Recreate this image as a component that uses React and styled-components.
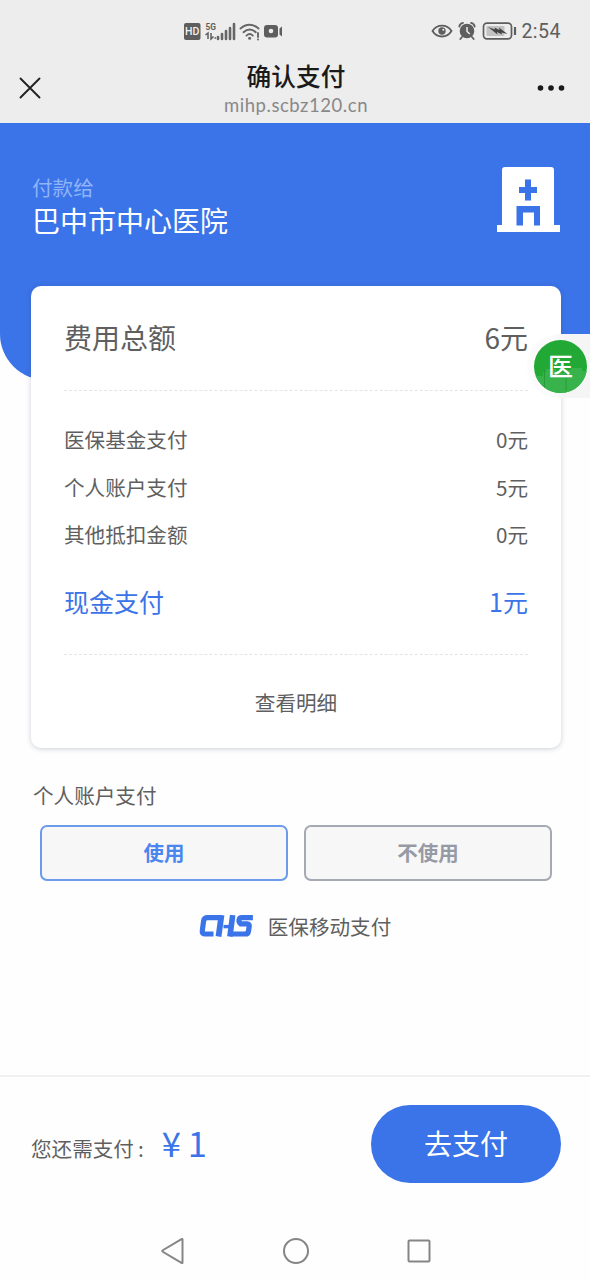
import React, { useState } from 'react';
import styled, { createGlobalStyle } from 'styled-components';

const fees = [
    { name: '医保基金支付', amount: 0 },
    { name: '个人账户支付', amount: 5 },
    { name: '其他抵扣金额', amount: 0 },
];

const StatusIcons = () => (
    <svg width="102" height="22" viewBox="0 0 102 22" fill="none">
        <rect x="1" y="3" width="16.500" height="17" rx="2" fill="#5e5e5e" />
        <text x="9.200" y="15.400" fontSize="10.500" fontWeight="500" textAnchor="middle" fill="#f2f2f2">HD</text>
        <text x="22.500" y="10" fontSize="9.500" fontWeight="700" fill="#5e5e5e" textLength="10.500" lengthAdjust="spacingAndGlyphs">5G</text>
        <path d="M22.500 15l2.500-2v6M28 13v6l2.500-2.500M31.500 18h1.500" stroke="#5e5e5e" strokeWidth="1.500" />
        <path d="M35 19v-2M39 19v-5M43 19v-8M47 19V8M51 19V4" stroke="#666" strokeWidth="2.600" strokeLinecap="round" />
        <path d="M57.500 8.500c5.500-5 12.500-5 18 0M60.500 12.200c4-3.500 8.500-3.500 12.300 0M63.500 15.600c2-1.800 4.500-1.800 6.300 0M75 13v4" stroke="#666" strokeWidth="1.900" strokeLinecap="round" />
        <circle cx="66.600" cy="18.300" r="1.500" fill="#666" />
        <circle cx="75" cy="19.500" r="1" fill="#666" />
        <rect x="81" y="5" width="14" height="12.500" rx="3" fill="#5e5e5e" />
        <circle cx="88" cy="11" r="2.300" fill="#ededed" />
        <path d="M96.500 8.500l2.500-2v10l-2.500-2z" fill="#5e5e5e" />
    </svg>
);

const BatteryIcons = () => (
    <svg width="86" height="22" viewBox="0 0 86 22" fill="none">
        <path d="M1.500 11C6 3.700 16 3.700 20.500 11 16 18.300 6 18.300 1.500 11z" stroke="#5e5e5e" strokeWidth="1.800" />
        <circle cx="11" cy="11" r="3.700" fill="#5e5e5e" />
        <circle cx="12.300" cy="9.700" r="1" fill="#ededed" />
        <circle cx="36" cy="11" r="7.300" fill="#5e5e5e" />
        <path d="M28.300 6.500c.3-2 1.700-3.300 3.700-3.600M43.700 6.500c-.3-2-1.700-3.300-3.700-3.600M31 17l-1.700 2M41 17l1.700 2" stroke="#5e5e5e" strokeWidth="1.800" strokeLinecap="round" />
        <path d="M36 7v4.500l2.800 2.500" stroke="#ededed" strokeWidth="1.500" />
        <rect x="52.500" y="3.200" width="28" height="15.600" rx="3.500" stroke="#5e5e5e" strokeWidth="1.700" />
        <rect x="55.500" y="6" width="18" height="10" rx="1" fill="#c2c2c2" />
        <path d="M57 7l7 2.500-.5-2 5 2.500-.5-2.500 4.500 3.500 4 3-6-1.500.5 2-5-2.500.5 2.500-5-4z" fill="#454545" />
        <path d="M84 7v8" stroke="#5e5e5e" strokeWidth="2.200" />
    </svg>
);

const HospitalIcon = () => (
    <svg width="64" height="68" viewBox="0 0 64 68">
        <path d="M9 1h46a3 3 0 0 1 3 3v55h6v7H1v-7h5V4a3 3 0 0 1 3-3z" fill="#fff" />
        <path d="M29 13.500h6v7.500h6v6h-6v7.500h-6V27h-6v-6h6z" fill="#3b73e8" />
        <path d="M20.500 40h23.500v19.500h-6V46.500h-11v13h-6.500z" fill="#3b73e8" />
    </svg>
);

const ChsLogo = () => (
    <svg width="54" height="22" viewBox="0 0 54 22" fill="none" stroke="#3b73e8">
        <path d="M14.500 19H6.300q-3.600 0-3-3.300L4.600 6q.5-3.300 4-3.300h14.500" strokeWidth="5.200" />
        <path d="M22.500.1L19.500 21.500" strokeWidth="5.800" />
        <path d="M24.500 11.600h9" strokeWidth="3.400" />
        <path d="M33.700.1L30.900 21.500" strokeWidth="5.600" />
        <path d="M53.900 2.700H43q-2.600 0-3 2.300t1.700 3.900h6.500q2.300 0 2 2.400l-.7 4.700q-.4 3-3.300 3H31" strokeWidth="5.200" />
    </svg>
);

const App = () => {
    const [useAccount, setUseAccount] = useState(true);

    return (
        <Page>
            <GlobalStyle />
            <StatusBar>
                <StatusIcons />
                <StatusRight>
                    <BatteryIcons />
                    <Clock>2:54</Clock>
                </StatusRight>
            </StatusBar>
            <TitleBar>
                <svg width="22" height="22" viewBox="0 0 22 22" stroke="#222" strokeWidth="1.900" strokeLinecap="round">
                    <path d="M1.500 1.500l19 19M20.500 1.500l-19 19" />
                </svg>
                <TitleBlock>
                    <Title>确认支付</Title>
                    <Host>mihp.scbz120.cn</Host>
                </TitleBlock>
                <svg width="28" height="6" viewBox="0 0 28 6" fill="#1a1a1a">
                    <circle cx="3.500" cy="3" r="2.800" />
                    <circle cx="14" cy="3" r="2.800" />
                    <circle cx="24.500" cy="3" r="2.800" />
                </svg>
            </TitleBar>
            <Hero>
                <div>
                    <PayeeLabel>付款给</PayeeLabel>
                    <Payee>巴中市中心医院</Payee>
                </div>
                <HospitalIcon />
            </Hero>
            <Card>
                <TotalRow>
                    <span>费用总额</span>
                    <span>6元</span>
                </TotalRow>
                <FeeList>
                    {fees.map((fee) => (
                        <FeeRow key={fee.name}>
                            <span>{fee.name}</span>
                            <span>{fee.amount}元</span>
                        </FeeRow>
                    ))}
                    <CashRow>
                        <span>现金支付</span>
                        <span>1元</span>
                    </CashRow>
                </FeeList>
                <DetailLink>查看明细</DetailLink>
                <FloatTab>
                    <FloatButton>
                        <Skyline viewBox="0 0 53 53">
                            <path d="M0 36h9v-4h3v-3h10v4h8v-3h7v-2h11v3h5v22H0z" fill="#38b34c" />
                            <path d="M10.500 30v20M32 33v18" stroke="#249c38" />
                        </Skyline>
                        <FloatGlyph>医</FloatGlyph>
                    </FloatButton>
                </FloatTab>
            </Card>
            <SectionLabel>个人账户支付</SectionLabel>
            <Options>
                <OptionButton $active={useAccount} onClick={() => setUseAccount(true)}>使用</OptionButton>
                <OptionButton $active={!useAccount} onClick={() => setUseAccount(false)}>不使用</OptionButton>
            </Options>
            <Brand>
                <ChsLogo />
                <span>医保移动支付</span>
            </Brand>
            <Footer>
                <DueLabel>
                    您还需支付<Colon>:</Colon>
                </DueLabel>
                <DueAmount>
                    <span>¥</span>
                    <span>1</span>
                </DueAmount>
                <PayButton>去支付</PayButton>
            </Footer>
            <NavBar>
                <svg width="26" height="28" viewBox="0 0 26 28">
                    <path d="M22.500 2.500v23q0 1-1 .4L2.800 14.800q-1-.8 0-1.600L21.500 2.100q1-.6 1 .4z" />
                </svg>
                <svg width="26" height="28" viewBox="0 0 26 28">
                    <circle cx="13" cy="14" r="12" />
                </svg>
                <svg width="26" height="28" viewBox="0 0 26 28">
                    <rect x="2.500" y="3.500" width="21" height="21" rx="1" />
                </svg>
            </NavBar>
        </Page>
    );
};

const GlobalStyle = createGlobalStyle`
* {
    box-sizing: border-box;
}
body {
    margin: 0;
    background: #fff;
}
button {
    font-family: inherit;
    cursor: pointer;
}
`;

const Page = styled.div`
width: 590px;
height: 1280px;
display: flex;
flex-direction: column;
overflow: hidden;
background: #fefefe;
color: #5f5f5f;
font-family: 'Noto Sans CJK SC', sans-serif;
font-size: 20.6px;
`;

const StatusBar = styled.div`
display: flex;
justify-content: space-between;
align-items: center;
height: 62px;
flex-shrink: 0;
padding: 0 29px 0 183px;
background: #ededed;
font-family: Roboto, sans-serif;
`;

const StatusRight = styled.div`
display: flex;
align-items: center;
gap: 4px;
`;

const Clock = styled.span`
padding-top: 2px;
font-size: 19.5px;
line-height: 22px;
letter-spacing: 0.5px;
color: #5e5e5e;
`;

const TitleBar = styled.header`
display: grid;
grid-template-columns: 28px 1fr 28px;
align-items: center;
height: 61px;
flex-shrink: 0;
padding: 0 25px 0 19px;
background: #ededed;

> svg {
    margin-bottom: 9px;
}
`;

const TitleBlock = styled.div`
display: flex;
flex-direction: column;
align-items: center;
padding: 0 0 4px 8px;
`;

const Title = styled.h1`
margin: 0;
font-size: 24.7px;
line-height: 26px;
font-weight: 500;
color: #1a1a1a;
`;

const Host = styled.div`
margin-top: 3px;
font-family: Lato, sans-serif;
font-size: 18.5px;
line-height: 28px;
letter-spacing: 0.55px;
color: #888;
`;

const Hero = styled.section`
display: flex;
justify-content: space-between;
align-items: flex-start;
height: 257px;
flex-shrink: 0;
padding: 42px 30px 0 32px;
background: #3b73e8;
border-radius: 0 0 46px 46px;

> svg {
    margin-top: 1px;
}
`;

const PayeeLabel = styled.div`
padding-top: 8px;
line-height: 28px;
color: #8fb4f8;
`;

const Payee = styled.div`
font-size: 28px;
line-height: 38px;
color: #fff;
`;

const Card = styled.section`
position: relative;
height: 462px;
flex-shrink: 0;
margin: -94px 29px 0 31px;
padding: 0 33px;
background: #fff;
border-radius: 10px;
box-shadow: 0 1px 5px rgba(60, 70, 100, 0.25);
`;

const TotalRow = styled.div`
display: flex;
justify-content: space-between;
align-items: center;
height: 105px;
padding-bottom: 3px;
border-bottom: 1px dashed #e4e4e4;
font-size: 28px;
`;

const FeeList = styled.div`
height: 264px;
padding-top: 25px;
border-bottom: 1px dashed #e4e4e4;
`;

const FeeRow = styled.div`
display: flex;
justify-content: space-between;
line-height: 47.7px;
`;

const CashRow = styled.div`
display: flex;
justify-content: space-between;
padding-top: 18px;
font-size: 25px;
line-height: 48px;
color: #3b73e8;
`;

const DetailLink = styled.div`
text-align: center;
line-height: 94px;
`;

const FloatTab = styled.div`
position: absolute;
top: 48px;
right: -29px;
display: flex;
align-items: center;
width: 63px;
height: 64px;
padding-left: 7px;
background: linear-gradient(90deg, #fbfbfb 40%, #f5f5f5 60%);
border-radius: 32px 0 0 32px;
`;

const FloatButton = styled.button`
display: grid;
width: 53px;
height: 53px;
padding: 0;
border: 0;
border-radius: 50%;
overflow: hidden;
background: #22a834;
color: #fff;
font-size: 25px;
font-weight: 500;
line-height: 51px;
`;

const Skyline = styled.svg`
grid-area: 1 / 1;
width: 53px;
height: 53px;
fill: none;
`;

const FloatGlyph = styled.span`
grid-area: 1 / 1;
z-index: 1;
`;

const SectionLabel = styled.div`
margin: 32px 0 0 33px;
line-height: 30px;
`;

const Options = styled.div`
display: flex;
gap: 16px;
padding: 15px 38px 0 40px;
`;

const OptionButton = styled.button`
flex: 1;
height: 56px;
padding: 0 0 2px;
background: #f7f7f8;
border: 2px solid ${(props) => (props.$active ? '#6c9bea' : '#a5a9b3')};
border-radius: 7px;
color: ${(props) => (props.$active ? '#4b86ee' : '#969aa5')};
font-size: 20.5px;
font-weight: 700;
`;

const Brand = styled.div`
display: flex;
justify-content: center;
align-items: center;
gap: 15px;
margin-top: 30px;
line-height: 30px;
`;

const Footer = styled.footer`
display: flex;
align-items: center;
height: 136px;
flex-shrink: 0;
margin-top: auto;
padding: 0 29px 0 31px;
border-top: 2px solid #f0f0f0;
`;

const DueLabel = styled.span`
padding-top: 8px;
`;

const Colon = styled.span`
margin-left: 4px;
`;

const DueAmount = styled.span`
display: flex;
gap: 7px;
margin: -4px 0 0 18px;
font-size: 34.5px;
line-height: 40px;
color: #3b73e8;
`;

const PayButton = styled.button`
width: 190px;
height: 78px;
margin-left: auto;
padding: 0 0 2px;
border: 0;
border-radius: 39px;
background: #3b73e8;
color: #fff;
font-size: 28px;
`;

const NavBar = styled.nav`
display: flex;
justify-content: center;
gap: 97px;
height: 69px;
flex-shrink: 0;
padding: 26px 0 0 1px;

svg {
    fill: none;
    stroke: #858585;
    stroke-width: 2;
}
`;

export default App;
